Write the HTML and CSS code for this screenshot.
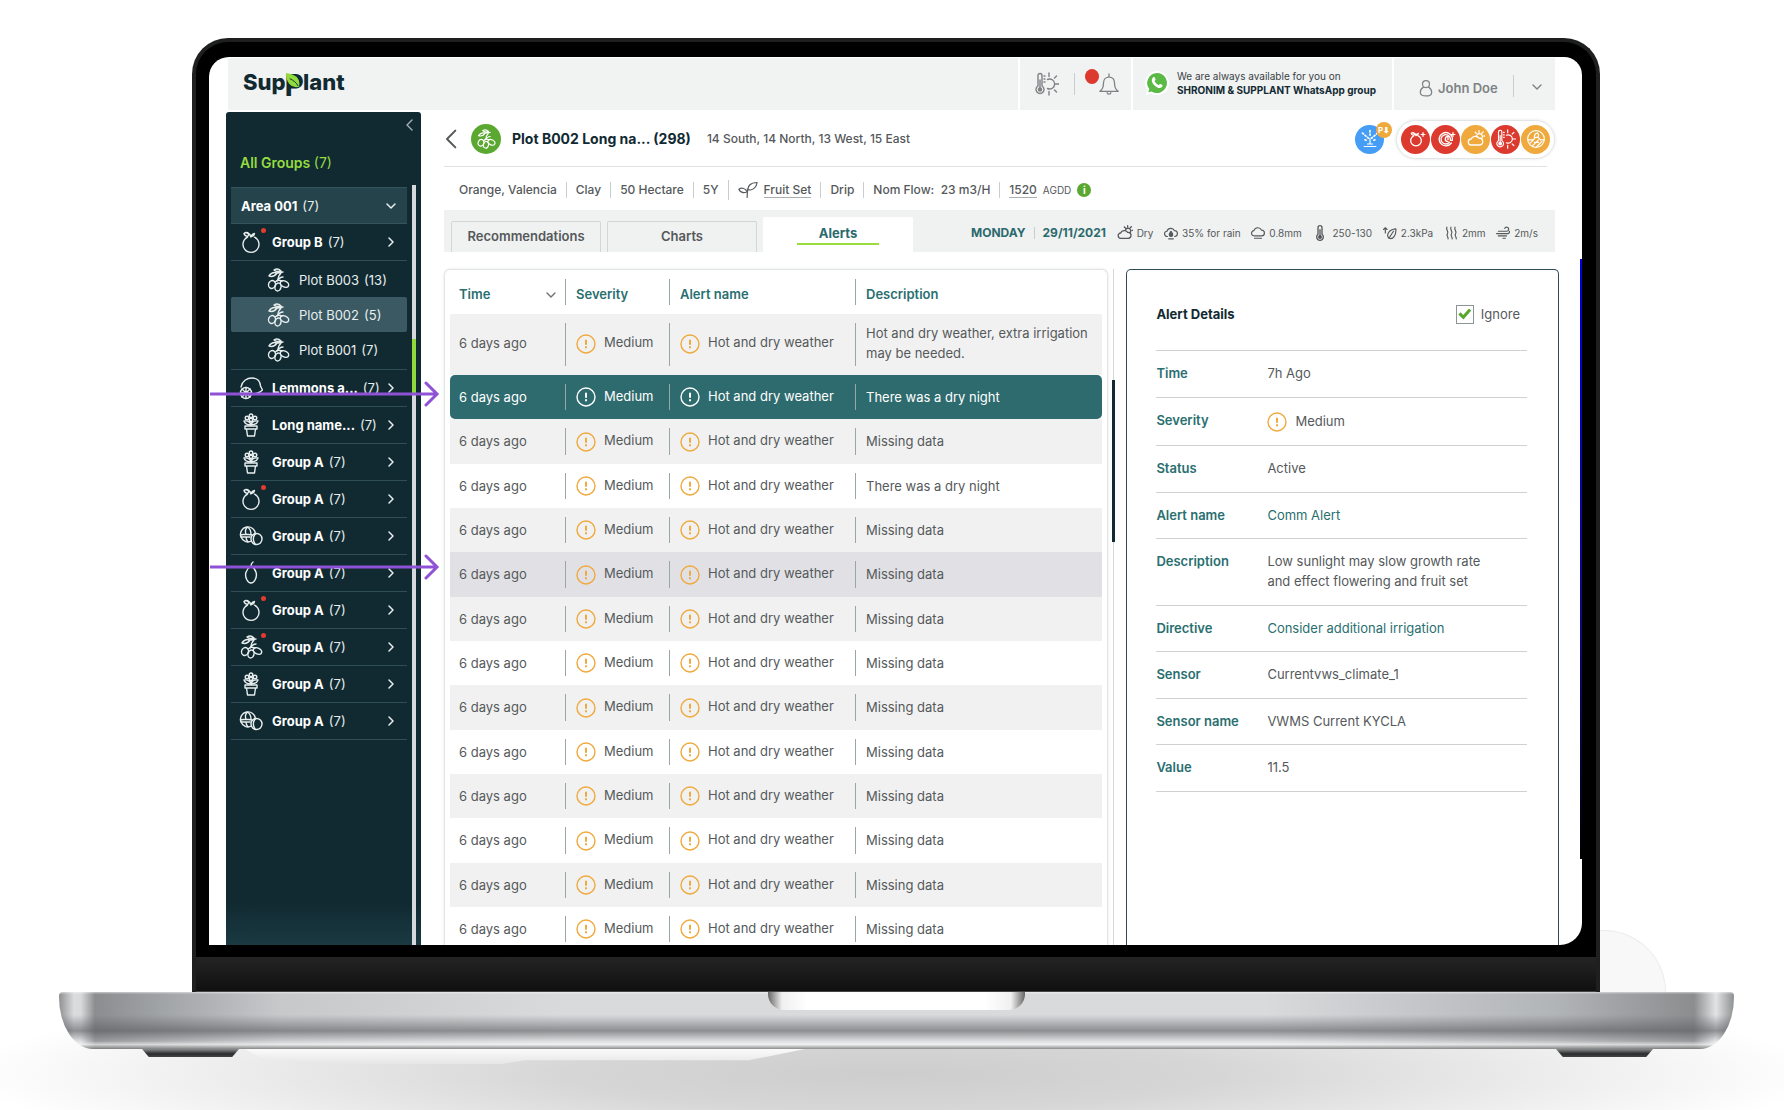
FILE: index.html
```html
<!DOCTYPE html>
<html lang="en">
<head>
<meta charset="utf-8">
<title>SupPlant – Alerts</title>
<link rel="stylesheet" href="styles.css">
</head>
<body>
<svg class="sprite" aria-hidden="true">
  <symbol id="orange" viewBox="0 0 24 24"><path d="M8.5 7.2a8 8 0 1 0 7 0M12 7c-.5-2-2-3.500-4-4M12 6.500c.6-1.500 1.800-2.800 3.500-3-.3 1.800-1.700 3-3.500 3zM9 6C7 6.500 5.500 5.500 5 3.500 6.500 2 9 2 10 4z"/></symbol>
  <symbol id="olive" viewBox="0 0 24 24"><path d="M3 8c2-3 5-4 8-3-2 3-5 4-8 3zM8 2c3-2 5-1 7 1-3 1-5 1-7-1zM11 5c2 0 4-1 6-1M15 5c-2 2-3 4-3 7M12 12l-3 2M12 12l4 1"/><ellipse cx="6" cy="16.500" rx="3.400" ry="4" transform="rotate(20 6 16.500)"/><ellipse cx="12" cy="19" rx="3" ry="4" transform="rotate(15 12 19)"/><ellipse cx="18.500" cy="16" rx="4.400" ry="3" transform="rotate(25 18.500 16)"/><path d="M11 13c2-3 4-4 6-4"/></symbol>
  <symbol id="lemon" viewBox="0 0 24 24"><path d="M2 11C3 5 8 2 13 2c5 0 8 3 8.500 8l2 4-2.500 2c-2 1-5 2-8 2"/><circle cx="7" cy="17" r="5.500"/><path d="M7 11.500v11M1.500 17h11M3 13l8 8M11 13l-8 8"/></symbol>
  <symbol id="pot" viewBox="0 0 24 24"><path d="M6 13h12v3H6zM7.500 16l1 7h7l1-7M12 13V8"/><circle cx="12" cy="2.800" r="1.800"/><circle cx="8" cy="5" r="1.800"/><circle cx="16" cy="5" r="1.800"/><circle cx="12" cy="7" r="1.800"/><path d="M12 12C9 12 6 11 5 8c3-.5 6 1 7 4zM12 12c3 0 6-1 7-4-3-.5-6 1-7 4z"/></symbol>
  <symbol id="nut" viewBox="0 0 24 24"><path d="M12.500 17A7.500 7.500 0 1 1 16.500 10"/><path d="M1.500 11c4-1 7-1 11 0M8 3.500c-2 2-2 4-1 7M9 3.500c3 2 3 4 3 7M2 13h9M7 13c0 2 1 4 2 5"/><circle cx="17.500" cy="15" r="5.500"/><path d="M16 10c-2 3-2 7 0 10"/></symbol>
  <symbol id="mango" viewBox="0 0 24 24"><path d="M12 5C7 8 5 14 8 19c2 4 6 4 8 0 3-5 1-11-4-14zM12 5c0-2 .5-3 2-4"/></symbol>
  <symbol id="right" viewBox="0 0 12 12"><path d="M4 2l4 4-4 4"/></symbol>
  <symbol id="left" viewBox="0 0 12 12"><path d="M8 1L3 6l5 5"/></symbol>
  <symbol id="down" viewBox="0 0 12 12"><path d="M2 4l4 4 4-4"/></symbol>
  <symbol id="warn" viewBox="0 0 20 20"><circle cx="10" cy="10" r="9"/><path d="M10 6.500v3.500M10 13v.4" stroke-width="2"/></symbol>
  <symbol id="heat" viewBox="0 0 24 24"><path d="M3 14V3.500a2 2 0 0 1 4 0V14a4 4 0 1 1-4 0zM5 8v8M9 4h1M9 7h1M9 10h1M12.500 7.500a5 5 0 1 1 0 9M14 1v3.500M14 19.500V23M19.500 6l2-2M19.500 18l2 2M20.500 12H24"/><circle cx="5" cy="17.500" r="1.600" fill="currentColor"/></symbol>
  <symbol id="bell" viewBox="0 0 24 24"><path d="M2 20c3-2 4-4 4-9 0-4 2.500-6.500 6-6.500S18 7 18 11c0 5 1 7 4 9zM12 4.500V1M10 21.500a2 1.500 0 0 0 4 0"/></symbol>
  <symbol id="cloudsun" viewBox="0 0 24 24"><path d="M6 20a4 4 0 0 1-.5-8A6 6 0 0 1 16 11a4.500 4.500 0 0 1 1 9zM13 7a4 4 0 1 1 6 5M16 1v2M22.500 8H24M11 3l1.500 1.500M21.500 2.500L20 4"/></symbol>
  <symbol id="raincloud" viewBox="0 0 24 24"><path d="M6 18a4.500 4.500 0 0 1-1-9 7 7 0 0 1 13-1 5 5 0 0 1 0 10M8 22h8"/><path d="M12 9c-2 3-3 4-3 6a3 3 0 0 0 6 0c0-2-1-3-3-6z" fill="currentColor"/></symbol>
  <symbol id="cloud" viewBox="0 0 24 24"><path d="M6 17a4.500 4.500 0 0 1-1-9 7 7 0 0 1 13-1 5 5 0 0 1 0 10zM6 21h12"/></symbol>
  <symbol id="thermo" viewBox="0 0 24 24"><path d="M9 14V4a3 3 0 0 1 6 0v10a5 5 0 1 1-6 0zM12 7v11"/><circle cx="12" cy="18" r="2" fill="currentColor"/></symbol>
  <symbol id="leaf" viewBox="0 0 24 24"><path d="M10 21C5 15 10 6 22 5c1 11-5 19-12 16zM10 21c3-4 5-8 8-12M4 12V3M1 6l3-3 3 3"/></symbol>
  <symbol id="steam" viewBox="0 0 24 24"><path d="M5 2c-3 4 4 7 1 11s2 6 1 9M12 2c-3 4 4 7 1 11s2 6 1 9M19 2c-3 4 4 7 1 11s2 6 1 9"/></symbol>
  <symbol id="wind" viewBox="0 0 24 24"><path d="M4 9h14a3.500 3.500 0 1 0-3-5M1 13h19a3 3 0 0 0 3-4M4 17h14M12 21h4"/></symbol>
  <symbol id="sprout" viewBox="0 0 24 20"><path d="M11 19c0-7 0-12 3-15 2-2 5-3 9-3-1 5-3 8-8 9-2 0-3 0-4-1M11 12C8 7 4 7 1 9c2 4 6 5 10 3z"/></symbol>
  <symbol id="user" viewBox="0 0 16 20"><circle cx="8" cy="5.500" r="4"/><path d="M5 9C2 11 1.500 13 1.500 15c0 3 2.500 4 6.500 4s6.500-1 6.500-4c0-2-.5-4-3.500-6"/></symbol>
  <symbol id="sprinkler" viewBox="0 0 24 24"><path d="M5 21h14M9 18h6M12 18v-7"/><path d="M12 2v8M3 5l7 6M21 5l-7 6M6 13l3 1M18 13l-3 1" stroke-dasharray="1.500 2.500" stroke-width="2"/></symbol>
  <symbol id="trunk" viewBox="0 0 24 24"><path d="M20 18A10 10 0 1 1 21.500 10v4h-3v-3A7 7 0 1 0 17 17M15 16a4 4 0 1 1 0-8v5M11 11v3"/></symbol>
  <symbol id="soil" viewBox="0 0 24 24"><circle cx="12" cy="12" r="10"/><path d="M2.500 13h6l3-3h3l3 3h4M10 10c0-3 1-5 4-5 2 2 1 4 0 5M5 17l4-4M8 20l7-7M13 21l6-6M10 16h5"/></symbol>
</svg>

<div class="stage">
  <div class="lid">
    <div class="screen">
      <header class="topbar">
        <a class="logo" href="#" aria-label="SupPlant">Sup<span class="logo-p">P<svg class="logo-leaf" viewBox="0 0 16 16"><path d="M0 0c8 1 16 4 14 15C6 16 0 11 0 0z" fill="#8fdc3c"/><path d="M4 6c4 2 7 4 9 8" fill="none" stroke="#112a32"/></svg></span>lant</a>
        <div class="tools">
          <button class="tool" aria-label="Climate"><svg class="ico i24"><use href="#heat"/></svg></button>
          <span class="rule"></span>
          <button class="tool bell" aria-label="Notifications"><svg class="ico i22"><use href="#bell"/></svg></button>
        </div>
        <a class="whatsapp" href="#">
          <svg class="wa" viewBox="0 0 26 26"><path d="M13 1a12 12 0 1 1-6 22.400L1.500 25l1.600-5.500A12 12 0 0 1 13 1z" fill="#fff"/><path d="M13 3a10 10 0 1 1-5.500 18.400L4.300 22.300l1-3.200A10 10 0 0 1 13 3z" fill="#5bb946"/><path d="M9 7.500c1.500-1 2 0 2.500 2 .2.800-1 1.300-.7 2 .7 1.500 2 2.700 3.500 3.400.8.300 1.300-1.100 2-.8 2 .8 2.800 1.200 2 2.500-1 1.700-3 1.700-5 .8-2.500-1.200-4.500-3.400-5.300-5.600-.5-1.700 0-3.500 1-4.300z" fill="#fff"/></svg>
          <span>We are always available for you on<b>SHRONIM &amp; SUPPLANT WhatsApp group</b></span>
        </a>
        <button class="account"><svg class="ico user-ico"><use href="#user"/></svg>John Doe<span class="rule"></span><svg class="ico i12"><use href="#down"/></svg></button>
      </header>

      <div class="body">
        <nav class="sidebar">
          <button class="collapse" aria-label="Collapse"><svg class="ico i12"><use href="#left"/></svg></button>
          <h2 class="all">All Groups <span>(7)</span></h2>
          <div class="nav-scroll">
            <ul class="groups">
              <li><a class="area" href="#"><b>Area 001</b> (7)<svg class="ico i12 go"><use href="#down"/></svg></a></li>
              <li><a class="group" href="#"><svg class="ico i24"><use href="#orange"/></svg><i class="dot"></i><b>Group B</b> (7)<svg class="ico i12 go"><use href="#right"/></svg></a>
                <ul class="plots">
                  <li><a class="plot" href="#"><svg class="ico i24"><use href="#olive"/></svg>Plot B003 <span>(13)</span></a></li>
                  <li><a class="plot current" href="#"><svg class="ico i24"><use href="#olive"/></svg>Plot B002 <span>(5)</span></a></li>
                  <li><a class="plot" href="#"><svg class="ico i24"><use href="#olive"/></svg>Plot B001 <span>(7)</span></a></li>
                </ul></li>
              <li><a class="group" href="#"><svg class="ico i24"><use href="#lemon"/></svg><b>Lemmons a...</b> (7)<svg class="ico i12 go"><use href="#right"/></svg></a></li>
              <li><a class="group" href="#"><svg class="ico i24"><use href="#pot"/></svg><b>Long name...</b> (7)<svg class="ico i12 go"><use href="#right"/></svg></a></li>
              <li><a class="group" href="#"><svg class="ico i24"><use href="#pot"/></svg><b>Group A</b> (7)<svg class="ico i12 go"><use href="#right"/></svg></a></li>
              <li><a class="group" href="#"><svg class="ico i24"><use href="#orange"/></svg><i class="dot"></i><b>Group A</b> (7)<svg class="ico i12 go"><use href="#right"/></svg></a></li>
              <li><a class="group" href="#"><svg class="ico i24"><use href="#nut"/></svg><b>Group A</b> (7)<svg class="ico i12 go"><use href="#right"/></svg></a></li>
              <li><a class="group" href="#"><svg class="ico i24"><use href="#mango"/></svg><b>Group A</b> (7)<svg class="ico i12 go"><use href="#right"/></svg></a></li>
              <li><a class="group" href="#"><svg class="ico i24"><use href="#orange"/></svg><i class="dot"></i><b>Group A</b> (7)<svg class="ico i12 go"><use href="#right"/></svg></a></li>
              <li><a class="group" href="#"><svg class="ico i24"><use href="#olive"/></svg><i class="dot"></i><b>Group A</b> (7)<svg class="ico i12 go"><use href="#right"/></svg></a></li>
              <li><a class="group" href="#"><svg class="ico i24"><use href="#pot"/></svg><b>Group A</b> (7)<svg class="ico i12 go"><use href="#right"/></svg></a></li>
              <li><a class="group" href="#"><svg class="ico i24"><use href="#nut"/></svg><b>Group A</b> (7)<svg class="ico i12 go"><use href="#right"/></svg></a></li>
            </ul>
            <div class="nav-track"></div>
          </div>
        </nav>

        <main class="main">
          <div class="title-row">
            <button class="back" aria-label="Back"><svg class="ico i20"><use href="#left"/></svg></button>
            <span class="plot-badge"><svg class="ico i20"><use href="#olive"/></svg></span>
            <h1>Plot B002 Long na... (298)</h1>
            <span class="where">14 South, 14 North, 13 West, 15 East</span>
            <span class="status blue lone"><svg class="ico i20"><use href="#sprinkler"/></svg><i class="mini">P⬇</i></span>
            <div class="pill">
              <span class="status red plus"><svg class="ico i16"><use href="#orange"/></svg></span>
              <span class="status red plus"><svg class="ico i16"><use href="#trunk"/></svg></span>
              <span class="status amber"><svg class="ico i18"><use href="#cloudsun"/></svg></span>
              <span class="status red"><svg class="ico i20"><use href="#heat"/></svg></span>
              <span class="status amber"><svg class="ico i20"><use href="#soil"/></svg></span>
            </div>
          </div>

          <ul class="facts">
            <li>Orange, Valencia</li>
            <li>Clay</li>
            <li>50 Hectare</li>
            <li>5Y</li>
            <li><svg class="ico i20"><use href="#sprout"/></svg><a href="#">Fruit Set</a></li>
            <li>Drip</li>
            <li>Nom Flow:&nbsp; 23 m3/H</li>
            <li><a href="#">1520</a><small>AGDD</small><i class="info">i</i></li>
          </ul>

          <div class="tabbar">
            <button class="tab">Recommendations</button>
            <button class="tab">Charts</button>
            <button class="tab active"><span>Alerts</span></button>
            <div class="weather">
              <div class="date"><b>MONDAY</b><span class="rule"></span><b>29/11/2021</b></div>
              <span><svg class="ico i16"><use href="#cloudsun"/></svg>Dry</span>
              <span><svg class="ico i14"><use href="#raincloud"/></svg>35% for rain</span>
              <span><svg class="ico i14"><use href="#cloud"/></svg>0.8mm</span>
              <span><svg class="ico i16"><use href="#thermo"/></svg>250-130</span>
              <span><svg class="ico i14"><use href="#leaf"/></svg>2.3kPa</span>
              <span><svg class="ico i14"><use href="#steam"/></svg>2mm</span>
              <span><svg class="ico i14"><use href="#wind"/></svg>2m/s</span>
            </div>
          </div>

          <div class="panes">
            <section class="list">
              <table>
                <colgroup><col class="c-time"><col class="c-sev"><col class="c-name"><col></colgroup>
                <thead><tr><th>Time<svg class="ico i12 sort"><use href="#down"/></svg></th><th>Severity</th><th>Alert name</th><th>Description</th></tr></thead>
                <tbody>
                  <tr class="tall"><td>6 days ago</td><td><svg class="ico i20 warn"><use href="#warn"/></svg>Medium</td><td><svg class="ico i20 warn"><use href="#warn"/></svg>Hot and dry weather</td><td>Hot and dry weather, extra irrigation may be needed.</td></tr>
                  <tr class="selected"><td>6 days ago</td><td><svg class="ico i20 warn"><use href="#warn"/></svg>Medium</td><td><svg class="ico i20 warn"><use href="#warn"/></svg>Hot and dry weather</td><td>There was a dry night</td></tr>
                  <tr><td>6 days ago</td><td><svg class="ico i20 warn"><use href="#warn"/></svg>Medium</td><td><svg class="ico i20 warn"><use href="#warn"/></svg>Hot and dry weather</td><td>Missing data</td></tr>
                  <tr><td>6 days ago</td><td><svg class="ico i20 warn"><use href="#warn"/></svg>Medium</td><td><svg class="ico i20 warn"><use href="#warn"/></svg>Hot and dry weather</td><td>There was a dry night</td></tr>
                  <tr><td>6 days ago</td><td><svg class="ico i20 warn"><use href="#warn"/></svg>Medium</td><td><svg class="ico i20 warn"><use href="#warn"/></svg>Hot and dry weather</td><td>Missing data</td></tr>
                  <tr class="hover"><td>6 days ago</td><td><svg class="ico i20 warn"><use href="#warn"/></svg>Medium</td><td><svg class="ico i20 warn"><use href="#warn"/></svg>Hot and dry weather</td><td>Missing data</td></tr>
                  <tr><td>6 days ago</td><td><svg class="ico i20 warn"><use href="#warn"/></svg>Medium</td><td><svg class="ico i20 warn"><use href="#warn"/></svg>Hot and dry weather</td><td>Missing data</td></tr>
                  <tr><td>6 days ago</td><td><svg class="ico i20 warn"><use href="#warn"/></svg>Medium</td><td><svg class="ico i20 warn"><use href="#warn"/></svg>Hot and dry weather</td><td>Missing data</td></tr>
                  <tr><td>6 days ago</td><td><svg class="ico i20 warn"><use href="#warn"/></svg>Medium</td><td><svg class="ico i20 warn"><use href="#warn"/></svg>Hot and dry weather</td><td>Missing data</td></tr>
                  <tr><td>6 days ago</td><td><svg class="ico i20 warn"><use href="#warn"/></svg>Medium</td><td><svg class="ico i20 warn"><use href="#warn"/></svg>Hot and dry weather</td><td>Missing data</td></tr>
                  <tr><td>6 days ago</td><td><svg class="ico i20 warn"><use href="#warn"/></svg>Medium</td><td><svg class="ico i20 warn"><use href="#warn"/></svg>Hot and dry weather</td><td>Missing data</td></tr>
                  <tr><td>6 days ago</td><td><svg class="ico i20 warn"><use href="#warn"/></svg>Medium</td><td><svg class="ico i20 warn"><use href="#warn"/></svg>Hot and dry weather</td><td>Missing data</td></tr>
                  <tr><td>6 days ago</td><td><svg class="ico i20 warn"><use href="#warn"/></svg>Medium</td><td><svg class="ico i20 warn"><use href="#warn"/></svg>Hot and dry weather</td><td>Missing data</td></tr>
                  <tr><td>6 days ago</td><td><svg class="ico i20 warn"><use href="#warn"/></svg>Medium</td><td><svg class="ico i20 warn"><use href="#warn"/></svg>Hot and dry weather</td><td>Missing data</td></tr>
                </tbody>
              </table>
            </section>
            <div class="list-track"></div>
            <aside class="details">
              <div class="details-head">
                <h3>Alert Details</h3>
                <label class="ignore"><input type="checkbox" checked>Ignore</label>
              </div>
              <dl>
                <div><dt>Time</dt><dd>7h Ago</dd></div>
                <div><dt>Severity</dt><dd class="sev"><svg class="ico i20 warn"><use href="#warn"/></svg>Medium</dd></div>
                <div><dt>Status</dt><dd>Active</dd></div>
                <div><dt>Alert name</dt><dd><a href="#">Comm Alert</a></dd></div>
                <div><dt>Description</dt><dd>Low sunlight may slow growth rate<br>and effect flowering and fruit set</dd></div>
                <div><dt>Directive</dt><dd><a href="#">Consider additional irrigation</a></dd></div>
                <div><dt>Sensor</dt><dd>Currentvws_climate_1</dd></div>
                <div><dt>Sensor name</dt><dd>VWMS Current KYCLA</dd></div>
                <div><dt>Value</dt><dd>11.5</dd></div>
              </dl>
            </aside>
          </div>
        </main>
      </div>
    </div>
    <div class="chin"></div>
    <svg class="arrow first" viewBox="0 0 230 26"><path d="M0 13h226M216 2l11 11-11 11"/></svg>
    <svg class="arrow second" viewBox="0 0 230 26"><path d="M0 13h226M216 2l11 11-11 11"/></svg>
    <div class="glint"></div>
    <div class="backdrop"></div>
  </div>
  <div class="base"><div class="notch"></div></div>
  <div class="floor"><div class="foot"></div><div class="glare"></div><div class="foot"></div></div>
</div>
</body>
</html>
```
FILE: styles.css
```css
* { box-sizing: border-box; }
body {
  margin: 0;
  background: #fff;
  font-family: Inter, "Liberation Sans", sans-serif;
  font-size: 13px;
  line-height: 20px;
  color: #55595b;
}
h1, h2, h3, ul, dl, dd { margin: 0; padding: 0; }
ul { list-style: none; }
a { color: inherit; text-decoration: none; }
button { font: inherit; color: inherit; background: none; border: 0; padding: 0; }
i { font-style: normal; }

.sprite { display: none; }
.ico { fill: none; stroke: currentColor; stroke-width: 1.4; stroke-linecap: round; stroke-linejoin: round; flex: none; vertical-align: middle; }
.i12 { width: 12px; height: 12px; }
.i14 { width: 14px; height: 14px; stroke-width: 2; }
.i16 { width: 16px; height: 16px; stroke-width: 2; }
.i18 { width: 18px; height: 18px; stroke-width: 1.7; }
.i20 { width: 20px; height: 20px; }
.i22 { width: 22px; height: 22px; }
.i24 { width: 24px; height: 24px; }
.rule { width: 1px; height: 22px; background: #c9cdce; }

/* laptop */
.stage {
  height: 100vh;
  min-width: 1400px;
  display: flex;
  flex-direction: column;
  padding-top: 38px;
  background: radial-gradient(ellipse 52% 100px at 50% calc(100% - 36px), #cdcdcd 0, #d6d6d6 35%, #ececec 70%, #fff 100%);
}
.lid {
  position: relative;
  flex: 1;
  min-height: 0;
  display: flex;
  flex-direction: column;
  margin: 0 184px 0 192px;
  padding: 15px 14px 0 13px;
  background: #000;
  border: 4px solid #1e1f1f;
  border-bottom: 0;
  border-radius: 36px 36px 0 0;
}
.screen {
  flex: 1;
  min-height: 0;
  overflow: hidden;
  display: flex;
  flex-direction: column;
  padding: 1px 27px 0 17px;
  background: #fff;
  border-radius: 20px 18px 22px 0;
}
.chin { flex: none; height: 35px; margin: 12px -14px 0 -13px; background: linear-gradient(#242424, #101010); border-bottom: 1px solid #444; }
.glint { position: absolute; right: 14px; top: 217px; width: 2px; height: 600px; background: linear-gradient(#0000e0, #0a0a80 60%, #000); }
.backdrop { position: absolute; left: 100%; bottom: 0; margin-left: 4px; width: 66px; height: 62px; background: #f8f8f8; border: 1px solid #ececec; border-width: 1px 1px 0 0; border-radius: 0 66px 0 0; }
.base {
  flex: none;
  height: 57px;
  margin: 0 50px 0 59px;
  border-radius: 4px 4px 34px 34px / 4px 4px 52px 52px;
  background:
    linear-gradient(rgba(255,255,255,.5) 0, rgba(255,255,255,0) 4%, rgba(255,255,255,0) 40%, rgba(90,92,95,.6) 68%, rgba(255,255,255,.1) 86%, rgba(255,255,255,.6) 92%, rgba(120,120,120,.8) 100%),
    linear-gradient(90deg, #8e9092 0, #dcdcde 15px, #d8d9db 22px, #8b8d8f 36px, #a0a3a5 100px, #c6c8ca 220px, #d8dadc 30%, #d8dadc 72%, #b2b5b7 calc(100% - 180px), #8b8d8f calc(100% - 40px), #e2e3e5 calc(100% - 18px), #8e9092 100%);
}
.notch { width: 257px; height: 18px; margin: 0 auto; background: linear-gradient(90deg, #666, #f0f0f1 14px, #fff 40px, #fff 217px, #f0f0f1 243px, #666); border-radius: 0 0 16px 16px; }
.floor { flex: none; height: 61px; display: flex; align-items: flex-start; padding: 0 131px 0 142px; }
.foot { width: 97px; height: 8px; background: linear-gradient(#8b8d8f, #2c2c2c 60%, #444); clip-path: polygon(0 0, 100% 0, 93% 100%, 7% 100%); }
.glare { height: 15px; width: 560px; margin: 0 auto 0 6px; background: linear-gradient(#fafafa, #e6e6e6); clip-path: polygon(0 0, 100% 0, 90% 75%, 50% 75%, 46% 100%, 10% 100%, 3% 60%); }
.arrow { position: absolute; left: 14px; width: 230px; height: 26px; fill: none; stroke: #8f52d6; stroke-width: 3; stroke-linecap: round; }
.arrow.first { top: 339px; }
.arrow.second { top: 512px; }

/* top bar */
.topbar { flex: none; display: flex; align-items: stretch; gap: 2px; height: 52px; margin-left: 2px; }
.topbar > * { display: flex; align-items: center; background: #f1f2f2; }
.logo { flex: 1; padding: 0 0 4px 15px; font-size: 22px; line-height: 30px; font-weight: 800; color: #112a32; }
.logo-p { position: relative; margin: 0 -1px; padding-top: 6px; font-size: 30px; font-weight: 700; }
.logo-leaf { position: absolute; left: 1px; top: 9px; width: 15px; height: 15px; }
.tools { width: 111px; padding: 0 11px 0 15px; justify-content: space-between; color: #7d8284; }
.bell { position: relative; margin-left: 8px; }
.bell::before { content: ""; position: absolute; left: -13px; top: -4px; width: 14px; height: 15px; border-radius: 50%; background: #dc392f; }
.whatsapp { width: 259px; padding: 0 0 2px 11px; gap: 7px; font-size: 10px; line-height: 14px; color: #3a4347; }
.whatsapp b { display: block; color: #112a32; }
.wa { width: 26px; height: 26px; flex: none; }
.account { width: 161px; padding: 8px 0 0 25px; gap: 5px; font-weight: 600; color: #7d8284; }
.account .rule { margin: 0 12px 4px auto; }
.account .i12 { margin: 0 12px 2px 0; }
.user-ico { width: 14px; height: 18px; }

/* sidebar */
.body { flex: 1; min-height: 0; display: flex; margin-top: 2px; }
.sidebar {
  flex: none;
  width: 195px;
  display: flex;
  flex-direction: column;
  color: #e8eeee;
  background: linear-gradient(#112a32 0, #112a32 95%, #1a3941 100%);
  border-radius: 3px 3px 0 0;
}
.collapse { align-self: flex-end; height: 24px; margin-right: 5px; color: #a6b1b4; }
.all { margin: 17px 0 12px 14px; font-size: 14px; font-weight: 600; line-height: 20px; color: #95dc3f; }
.all span { font-weight: 400; }
.nav-scroll { flex: 1; min-height: 0; display: flex; gap: 5px; padding-left: 5px; }
.groups { flex: none; width: 176px; padding-top: 2px; }
.area, .group, .plot { display: flex; align-items: center; gap: 5px; }
.area { height: 37px; padding: 0 10px; background: #25434b; border: solid #34555e; border-width: 1px 0; }
.groups > li + li { border-bottom: 1px solid #2f4e57; }
.group { position: relative; height: 36px; padding: 0 10px 0 8px; }
.groups b { font-weight: 700; color: #fff; }
.group .i24 { margin-right: 4px; }
.go { margin-left: auto; stroke-width: 1.5; }
.dot { position: absolute; left: 30px; top: 4px; width: 5px; height: 5px; border-radius: 50%; background: #e23a2e; }
.plots { padding: 1px 0 2px; border-top: 1px solid #2f4e57; }
.plot { height: 35px; padding-left: 35px; gap: 9px; border-radius: 2px; }
.plot span { margin-left: -4px; }
.plot.current { background: #3a5963; }
.nav-track { width: 4px; background: linear-gradient(#d5d9dc 154px, #8fd93a 154px, #8fd93a 208px, #d5d9dc 208px); }

/* main column */
.main { flex: 1; min-width: 0; display: flex; flex-direction: column; padding-left: 23px; }
.title-row { display: flex; align-items: center; height: 55px; margin-right: 8px; border-bottom: 1px solid #dfe2e3; }
.back { margin: 0 9px 0 -2px; line-height: 0; }
.back .ico { stroke-width: 1.2; }
.plot-badge { display: grid; place-items: center; width: 30px; height: 30px; margin-right: 11px; border-radius: 50%; background: #5aa82f; color: #fff; }
h1 { font-size: 14px; line-height: 20px; font-weight: 700; color: #112a32; margin-right: 16px; }
.where { font-size: 12px; font-weight: 500; margin-right: auto; }
.status { position: relative; display: grid; place-items: center; width: 29px; height: 29px; border-radius: 50%; color: #fff; }
.blue { background: #459df5; }
.red { background: #dc392f; }
.amber { background: #efa93d; }
.lone { margin-right: 12px; }
.mini { position: absolute; left: 21px; top: -3px; width: 16px; height: 16px; border-radius: 50%; background: #efa93d; font-size: 8px; line-height: 16px; font-weight: 700; text-align: center; }
.plus::after { content: "+"; position: absolute; right: 4px; top: 4px; font-size: 9px; line-height: 9px; font-weight: 700; }
.pill { display: flex; gap: 1px; padding: 4px; margin-right: -8px; border: 1px solid #e2e4e5; border-radius: 20px; box-shadow: 0 0 3px #dcdfe0; }
.facts { display: flex; align-items: center; height: 43px; padding: 3px 0 0 15px; font-size: 12px; font-weight: 500; }
.facts li { display: flex; align-items: center; gap: 6px; line-height: 16px; }
.facts li + li { margin-left: 9px; padding-left: 9px; border-left: 1px solid #c9cdce; }
.facts a { border-bottom: 1px solid #a9aeb0; line-height: 14px; }
.facts small { font-size: 10px; font-weight: 400; }
.info { width: 14px; height: 14px; border-radius: 50%; background: #5aa82f; color: #fff; font-size: 10px; line-height: 14px; font-weight: 700; text-align: center; }
.tabbar { flex: none; display: flex; align-items: flex-end; gap: 6px; height: 42px; padding-left: 7px; background: #f0f1f1; }
.tab { width: 150px; height: 31px; padding-bottom: 2px; border: 1px solid #d3d6d7; border-bottom: 0; border-radius: 2px 2px 0 0; font-weight: 600; }
.tab.active { height: 35px; border-color: #fff; background: #fff; color: #2a6a6d; }
.tab.active span { display: block; width: 82px; margin: 0 auto; border-bottom: 2px solid #9bdd3f; font-weight: 700; }
.weather { flex: 1; display: flex; align-items: center; justify-content: space-between; height: 38px; padding: 0 17px 0 52px; font-size: 10px; }
.weather b { font-size: 12px; color: #2a6a6d; }
.weather > span { display: flex; align-items: center; gap: 4px; }
.date { display: flex; align-items: center; gap: 8px; }
.date .rule { height: 12px; }
.panes { flex: 1; min-height: 0; display: grid; grid-template-columns: minmax(0, 665fr) 3px minmax(0, 433fr); margin: 17px -4px 0 0; }
.list { padding: 0 5px; border: 1px solid #e2e4e5; border-bottom: 0; border-radius: 6px 6px 0 0; box-shadow: 0 0 3px #e2e4e5; }
.panes { column-gap: 0; }
.list { margin-right: 4px; }
.details { margin-left: 11px; }
.list-track { background: linear-gradient(#112a32, #112a32) 0 111px / 3px 162px no-repeat, linear-gradient(#d3d6d7, #d3d6d7) 1px 0 / 1px 100% no-repeat; }
.panes { grid-template-columns: minmax(0, 669fr) 3px minmax(0, 444fr); }

table { width: 100%; border-collapse: collapse; table-layout: fixed; }
.c-time { width: 115px; }
.c-sev { width: 104px; }
.c-name { width: 186px; }
th, td { height: 44px; padding: 0 0 1px 9px; text-align: left; vertical-align: middle; }
th { padding: 4px 0 0 9px; font-weight: 600; color: #2a6f70; }
th + th, td + td { padding-left: 11px; background: linear-gradient(#9ba6aa, #9ba6aa) 0 50% / 1px calc(100% - 18px) no-repeat; }
.sort { float: right; margin: 5px 8px 0 0; color: #6c7274; }
tbody tr:nth-child(3n) td { height: 45px; }
.tall td { height: 61px; padding-bottom: 3px; }
tbody tr:nth-child(odd) { background: #f1f1f1; }
tbody .selected { background: none; color: #fff; }
.selected td { background-color: #2e6b6e; }
.selected td:first-child { border-radius: 5px 0 0 5px; }
.selected td:last-child { border-radius: 0 5px 5px 0; }
tbody .hover { background: #e1e1e5; }
.warn { color: #efa93d; margin-right: 8px; }
.selected .warn { color: #fff; }

/* details */
.details { padding: 0 31px 0 29px; border: 1px solid #2d4b55; border-bottom: 0; border-radius: 5px 5px 0 0; }
.details-head { display: flex; align-items: center; justify-content: space-between; height: 81px; padding: 8px 7px 0 0; border-bottom: 1px solid #cfd2d3; }
h3 { font-size: 13px; font-weight: 700; color: #112a32; }
.ignore { display: flex; align-items: center; gap: 7px; }
.ignore input { appearance: none; width: 18px; height: 19px; margin: 0; border: 1px solid #8d9496; display: grid; place-items: center; }
.ignore input:checked::before { content: ""; width: 13px; height: 11px; background: #5aa82f; clip-path: polygon(0 55%, 18% 35%, 38% 58%, 82% 0, 100% 18%, 40% 100%); }
dl > div { display: flex; padding: 12px 0 13px; border-bottom: 1px solid #cfd2d3; }
dl > div:nth-child(odd) { padding-bottom: 14px; }
dt { flex: none; width: 111px; font-weight: 600; color: #2a6f70; }
dd a { color: #2a6f70; }
.sev { line-height: 22px; }
```
